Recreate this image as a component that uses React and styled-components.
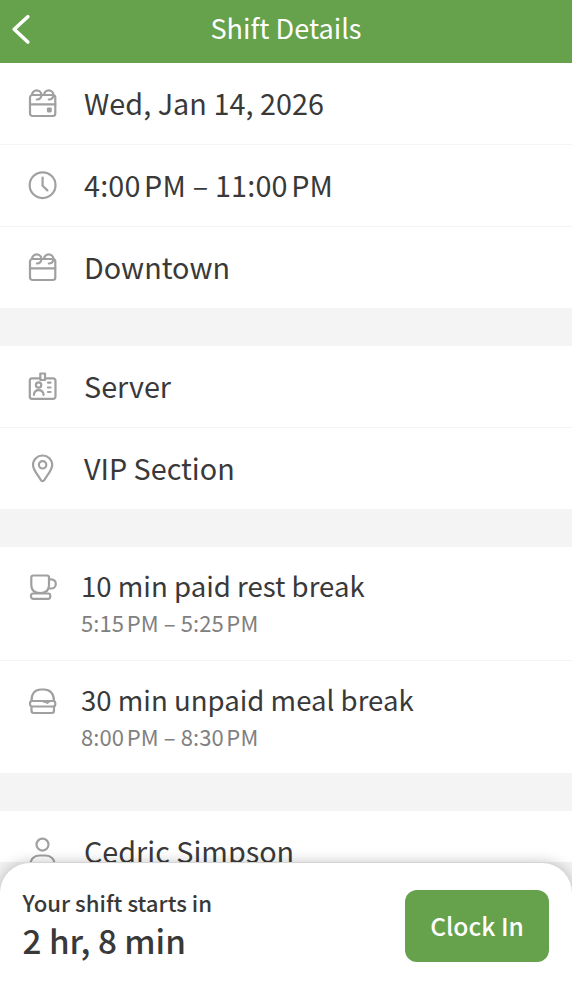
import styled, { createGlobalStyle } from 'styled-components';

const GlobalStyle = createGlobalStyle`
  * {
    box-sizing: border-box;
  }

  body {
    margin: 0;
    background-color: #fff;
    font-family: "Noto Sans CJK JP", "Noto Sans", sans-serif;
    color: #393939;
  }
`;

const Screen = styled.div`
  width: 100%;
  height: 986px;
  display: flex;
  flex-direction: column;
  overflow: hidden;
`;

const Header = styled.header`
  height: 63px;
  flex-shrink: 0;
  display: grid;
  grid-template-columns: 60px 1fr 60px;
  background-color: #66a14b;
  color: white;
`;

const BackButton = styled.button`
  height: 58px;
  padding: 0 0 0 10px;
  border: none;
  background: none;
  display: flex;
  align-items: center;
`;

const Title = styled.h1`
  margin: 0;
  font-size: 27.1px;
  font-weight: 400;
  line-height: 55px;
  text-align: center;
`;

const Content = styled.main`
  flex: 1;
  min-height: 0;
  overflow: hidden;
`;

const Section = styled.section`
  & + & {
    border-top: 38px solid #f4f4f4;
  }
`;

const Row = styled.div`
  height: 82px;
  padding: 24px 26px 0;
  display: flex;
  align-items: flex-start;
  gap: 26px;
  border-bottom: 1px solid #f4f4f4;

  &:last-child {
    height: 81px;
    border-bottom: none;
  }
`;

const BreakRow = styled(Row)`
  height: 114px;
  padding-top: 25px;
  gap: 23px;

  &:last-child {
    height: 112px;
  }
`;

const Icon = styled.svg`
  width: 32px;
  height: 32px;
  flex-shrink: 0;
  fill: none;
  stroke: #a0a0a0;
  stroke-width: 2.2;
  stroke-linecap: round;
  stroke-linejoin: round;
`;

const Label = styled.div`
  font-size: 28.75px;
  line-height: 32px;
  letter-spacing: ${({ $spacing }) => $spacing || 'normal'};
  white-space: nowrap;
`;

const BreakLabel = styled(Label)`
  margin-top: -3px;
  font-size: 27.6px;
`;

const Time = styled.div`
  margin-top: 5px;
  font-size: 22px;
  line-height: 32px;
  letter-spacing: 0.1px;
  color: #808080;
  white-space: nowrap;
`;

const Footer = styled.footer`
  height: 124px;
  flex-shrink: 0;
  padding-top: 1px;
  background-color: #f2f2f2;
`;

const Panel = styled.div`
  position: relative;
  height: 100%;
  padding: 0 23px 0 22.5px;
  display: flex;
  justify-content: space-between;
  border-radius: 30px 30px 0 0;
  background-color: #fff;
  box-shadow: 0 0 14px rgba(0, 0, 0, 0.26);
`;

const Countdown = styled.div`
  padding-top: 23px;
`;

const CountdownLabel = styled.div`
  font-size: 22.2px;
  font-weight: 500;
  line-height: 32px;
`;

const CountdownTime = styled.div`
  font-size: 33.2px;
  font-weight: 500;
  line-height: 44px;
`;

const ClockInButton = styled.button`
  width: 144px;
  height: 72px;
  margin-top: 27px;
  padding: 0 0 2px;
  border: none;
  border-radius: 12px;
  background-color: #66a14b;
  color: white;
  font-family: inherit;
  font-size: 24.6px;
  font-weight: 500;
`;

function GiftBoxIcon({ marked }) {
  return (
    <Icon viewBox="0 0 32 32">
      <rect x="4" y="8" width="25.3" height="21" rx="2.5" />
      <path d="M4 17.3h25.3" />
      <path d="M6 8a4.7 4.7 0 0 1 9.4 0c0 2.6-1.7 4.4-4.6 4.5" />
      <path d="M18 8a4.7 4.7 0 0 1 9.4 0c0 2.6-1.7 4.4-4.6 4.5" />
      {marked && <rect x="22" y="21.6" width="2.7" height="2.7" fill="#a0a0a0" />}
    </Icon>
  );
}

function ClockIcon() {
  return (
    <Icon viewBox="0 0 32 32">
      <circle cx="16.6" cy="16.2" r="12.9" />
      <path d="M16.6 8.6v8.2l4.8 4.6" />
    </Icon>
  );
}

function BadgeIcon() {
  return (
    <Icon viewBox="0 0 32 32">
      <path d="M14.3 8.3H6a2.3 2.3 0 0 0-2.2 2.3v15.9A2.3 2.3 0 0 0 6 28.8h21.2a2.3 2.3 0 0 0 2.3-2.3V10.6a2.3 2.3 0 0 0-2.3-2.3H19" />
      <path d="M14.3 3.5H19V10h-4.7z" />
      <circle cx="12.6" cy="15" r="2.7" />
      <path d="M7.9 24.8c.3-3.2 2-4.6 4.7-4.6s4.6 1.400 5 4.600" />
      <path d="M22 12.7h2.5M22 17.5h2.5M22 22h2.5" />
    </Icon>
  );
}

function PinIcon() {
  return (
    <Icon viewBox="0 0 32 32">
      <path d="M16.6 3.5A9.500 9.500 0 0 0 7 13c0 5 4.800 9.800 7.600 14.600q2 3.200 4 0C21.400 22.800 26.200 18 26.200 13a9.500 9.500 0 0 0-9.600-9.500z" />
      <circle cx="16.6" cy="12.8" r="3.7" />
    </Icon>
  );
}

function CupIcon() {
  return (
    <Icon viewBox="0 0 32 32">
      <path d="M7.3 3.5H21a2 2 0 0 1 2 2V13c0 5-3 8-8.800 8S5.300 18 5.300 13V5.500a2 2 0 0 1 2-2z" />
      <path d="M23 7.3h2.2a4.500 4.500 0 0 1 0 9.200h-2.500" />
      <rect x="5" y="21.5" width="19.3" height="5.3" rx="2.3" />
    </Icon>
  );
}

function BurgerIcon() {
  return (
    <Icon viewBox="0 0 32 32">
      <path d="M5.5 14.7C5.5 7.5 9 3.5 15 3.500h3c6 0 10 4 10 11.200" />
      <rect x="4" y="15" width="25.3" height="5.5" rx="2.3" />
      <path d="M5.5 20.5v4.3A2.200 2.200 0 0 0 7.700 27h18.100a2.200 2.200 0 0 0 2.200-2.200v-4.300" />
      <path d="M16 15.5l6 2 2-2z" fill="#a0a0a0" strokeWidth="1" />
    </Icon>
  );
}

function PersonIcon() {
  return (
    <Icon viewBox="0 0 32 32">
      <circle cx="16.5" cy="9.6" r="6" />
      <path d="M4.3 30c0-6 4-9.500 9-9.500h6.400c5 0 9 3.500 9 9.500" />
    </Icon>
  );
}

export default function App() {
  return (
    <>
      <GlobalStyle />
      <Screen>
        <Header>
          <BackButton type="button" aria-label="Back">
            <svg width="22" height="32" viewBox="0 0 22 32" fill="none" stroke="#fff" strokeWidth="3.6" strokeLinecap="round" strokeLinejoin="round">
              <path d="M17.8 3.7L4.200 16.300 17.800 29" />
            </svg>
          </BackButton>
          <Title>Shift Details</Title>
        </Header>

        <Content>
          <Section>
            <Row>
              <GiftBoxIcon marked />
              <Label $spacing="0.05px">Wed, Jan 14, 2026</Label>
            </Row>
            <Row>
              <ClockIcon />
              <Label $spacing="0.2px">{'4:00\u202fPM – 11:00\u202fPM'}</Label>
            </Row>
            <Row>
              <GiftBoxIcon />
              <Label>Downtown</Label>
            </Row>
          </Section>

          <Section>
            <Row>
              <BadgeIcon />
              <Label>Server</Label>
            </Row>
            <Row>
              <PinIcon />
              <Label>VIP Section</Label>
            </Row>
          </Section>

          <Section>
            <BreakRow>
              <CupIcon />
              <div>
                <BreakLabel>10 min paid rest break</BreakLabel>
                <Time>{'5:15\u202fPM – 5:25\u202fPM'}</Time>
              </div>
            </BreakRow>
            <BreakRow>
              <BurgerIcon />
              <div>
                <BreakLabel>30 min unpaid meal break</BreakLabel>
                <Time>{'8:00\u202fPM – 8:30\u202fPM'}</Time>
              </div>
            </BreakRow>
          </Section>

          <Section>
            <Row>
              <PersonIcon />
              <Label>Cedric Simpson</Label>
            </Row>
          </Section>
        </Content>

        <Footer>
          <Panel>
            <Countdown>
              <CountdownLabel>Your shift starts in</CountdownLabel>
              <CountdownTime>2 hr, 8 min</CountdownTime>
            </Countdown>
            <ClockInButton type="button">Clock In</ClockInButton>
          </Panel>
        </Footer>
      </Screen>
    </>
  );
}
